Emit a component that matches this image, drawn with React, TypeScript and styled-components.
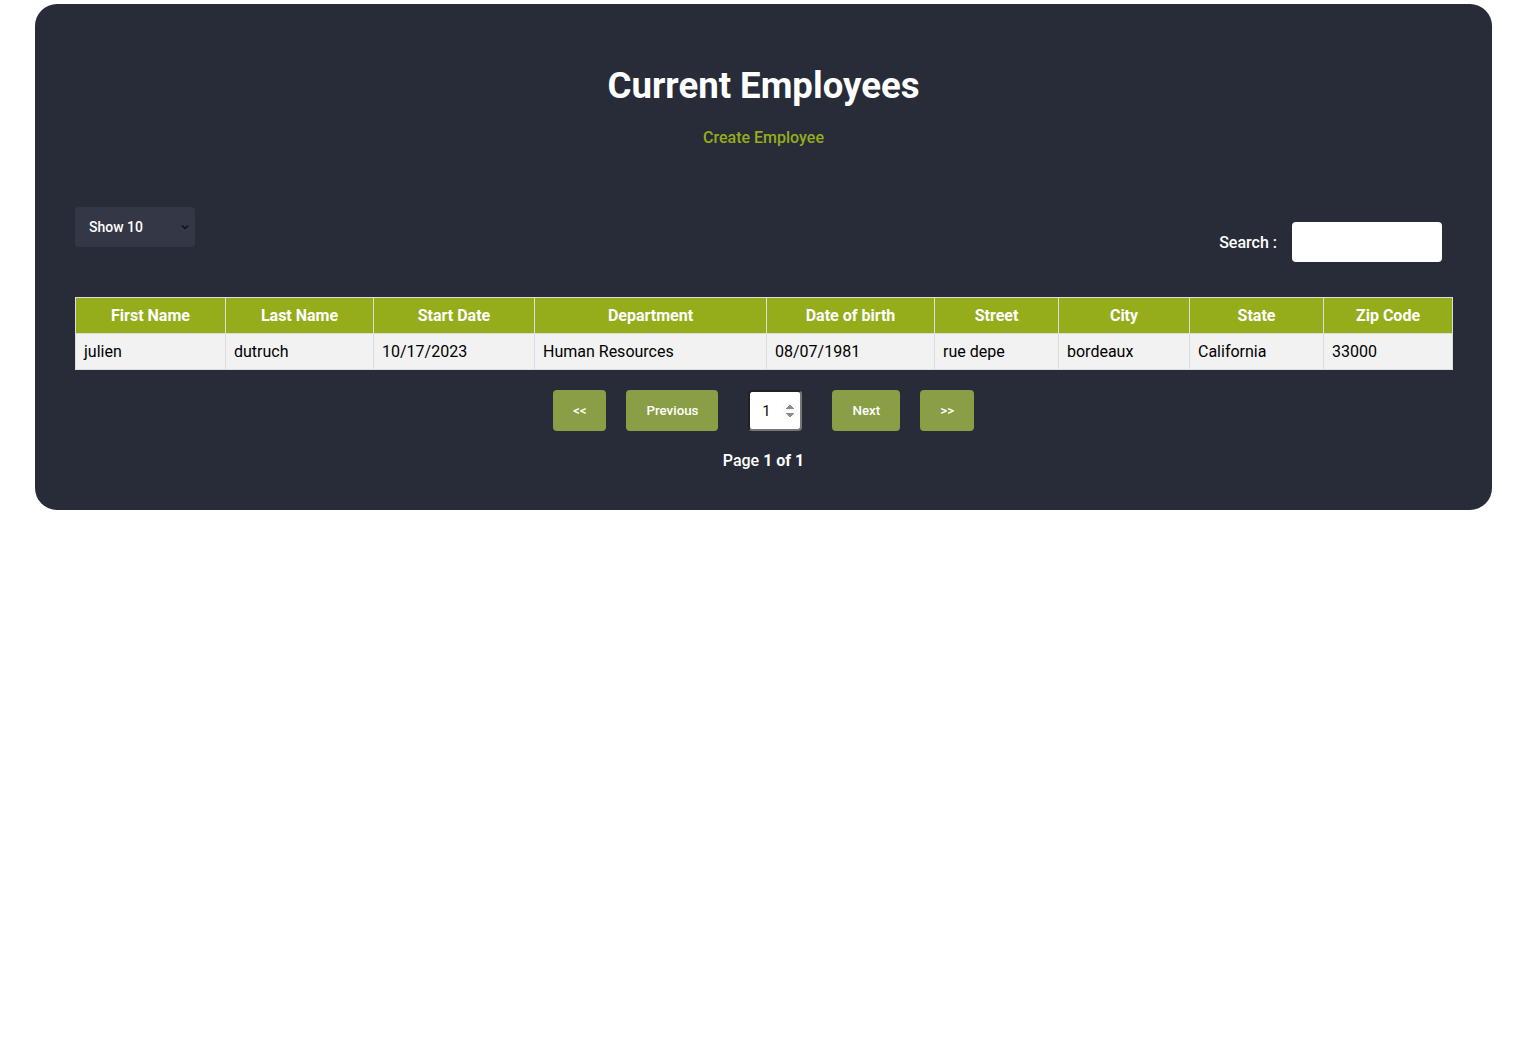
import React from "react";
import styled, { createGlobalStyle } from "styled-components";

const Global = createGlobalStyle`
  html, body { margin: 0; padding: 0; background: #ffffff; }
  body { font-family: Roboto, "Noto Sans", sans-serif; }
  * { box-sizing: border-box; }
`;

const Page = styled.div`
  padding: 4px 24px 0 35px;
`;

const Card = styled.main`
  background: #282c38;
  border-radius: 22px;
  padding: 40px 40px 40px;
  color: #ffffff;
`;

const Header = styled.header`
  display: flex;
  flex-direction: column;
  align-items: center;
  padding-top: 21px;
`;

const Title = styled.h1`
  margin: 0;
  font-size: 36.6px;
  line-height: 42px;
  font-weight: 700;
`;

const CreateLink = styled.a`
  margin-top: 21px;
  font-size: 16px;
  line-height: 19px;
  font-weight: 500;
  color: #95ad1a;
  text-decoration: none;
`;

const Controls = styled.div`
  display: flex;
  justify-content: space-between;
  align-items: flex-start;
  margin-top: 60px;
`;

const SelectWrap = styled.div`
  position: relative;
  width: 120px;
  height: 40px;
`;

const ShowSelect = styled.select`
  appearance: none;
  width: 100%;
  height: 100%;
  background: #333746;
  color: #ffffff;
  border: none;
  border-radius: 4px;
  padding: 0 14px;
  font-family: Roboto, sans-serif;
  font-size: 14px;
  font-weight: 500;
`;

const Chevron = styled.svg`
  position: absolute;
  right: 6px;
  top: 16px;
  width: 8px;
  height: 8px;
  pointer-events: none;
`;

const SearchBox = styled.label`
  display: flex;
  align-items: center;
  gap: 15px;
  margin-top: 15px;
  margin-right: 10px;
  font-size: 16px;
  font-weight: 500;
`;

const SearchInput = styled.input`
  width: 150px;
  height: 40px;
  border: none;
  border-radius: 4px;
  background: #ffffff;
  padding: 0 10px;
  font-family: Roboto, sans-serif;
  font-size: 16px;
`;

const Table = styled.table`
  width: 100%;
  margin-top: 35px;
  border-collapse: collapse;
  table-layout: fixed;
  font-size: 16px;
`;

const Th = styled.th`
  background: #95ad1a;
  color: #ffffff;
  font-weight: 700;
  height: 36px;
  padding: 0 8px;
  border: 1px solid #dddddd;
  text-align: center;
`;

const Td = styled.td`
  background: #f2f2f2;
  color: #000000;
  height: 36px;
  padding: 0 8px;
  border: 1px solid #dddddd;
  text-align: left;
`;

const Pager = styled.div`
  display: flex;
  justify-content: center;
  align-items: center;
  margin-top: 20px;
`;

const PagerButton = styled.button`
  height: 41px;
  padding: 0 20px;
  margin: 0 10px;
  background: #8a9e45;
  color: #ffffff;
  border: none;
  border-radius: 4px;
  font-family: Roboto, sans-serif;
  font-size: 13.333px;
  font-weight: 500;
`;

const PageInput = styled.input`
  width: 54px;
  height: 41px;
  margin: 0 20px;
  border: 2px inset #767676;
  border-radius: 4px;
  background: #ffffff;
  padding: 0 2px 0 12px;
  font-family: Roboto, sans-serif;
  font-size: 14px;
  color: #000000;
  &::-webkit-inner-spin-button {
    opacity: 1;
  }
`;

const PageInfo = styled.p`
  margin: 20px 0 0;
  text-align: center;
  font-size: 16px;
  line-height: 19px;
  font-weight: 500;
  strong { font-weight: 700; }
`;

const columns = [
  { label: "First Name", width: 150 },
  { label: "Last Name", width: 148 },
  { label: "Start Date", width: 161 },
  { label: "Department", width: 232 },
  { label: "Date of birth", width: 168 },
  { label: "Street", width: 124 },
  { label: "City", width: 131 },
  { label: "State", width: 134 },
  { label: "Zip Code", width: 129 },
];

const rows = [
  ["julien", "dutruch", "10/17/2023", "Human Resources", "08/07/1981", "rue depe", "bordeaux", "California", "33000"],
];

export default function App() {
  return (
    <Page>
      <Global />
      <Card>
        <Header>
          <Title>Current Employees</Title>
          <CreateLink href="#">Create Employee</CreateLink>
        </Header>
        <Controls>
          <SelectWrap>
            <ShowSelect defaultValue="10">
              <option value="10">Show 10</option>
              <option value="25">Show 25</option>
              <option value="50">Show 50</option>
            </ShowSelect>
            <Chevron viewBox="0 0 8 8">
              <path d="M1 2.5 L4 5.5 L7 2.5" fill="none" stroke="#111" strokeWidth="1.4" />
            </Chevron>
          </SelectWrap>
          <SearchBox>
            Search :
            <SearchInput type="text" />
          </SearchBox>
        </Controls>
        <Table>
          <colgroup>
            {columns.map((c) => (
              <col key={c.label} style={{ width: c.width }} />
            ))}
          </colgroup>
          <thead>
            <tr>
              {columns.map((c) => (
                <Th key={c.label}>{c.label}</Th>
              ))}
            </tr>
          </thead>
          <tbody>
            {rows.map((r, i) => (
              <tr key={i}>
                {r.map((v, j) => (
                  <Td key={j}>{v}</Td>
                ))}
              </tr>
            ))}
          </tbody>
        </Table>
        <Pager>
          <PagerButton>{"<<"}</PagerButton>
          <PagerButton>Previous</PagerButton>
          <PageInput type="number" defaultValue={1} min={1} max={1} />
          <PagerButton>Next</PagerButton>
          <PagerButton>{">>"}</PagerButton>
        </Pager>
        <PageInfo>
          Page <strong>1 of 1</strong>
        </PageInfo>
      </Card>
    </Page>
  );
}
